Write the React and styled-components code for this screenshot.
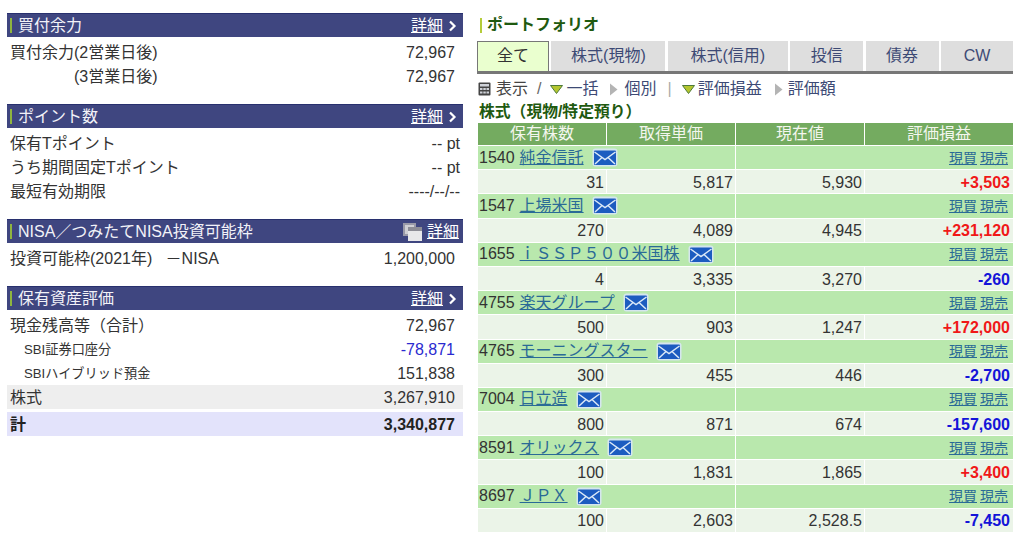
import React from "react";
import styled, { createGlobalStyle } from "styled-components";

const stocks = [
  { code: "1540", name: "純金信託", qty: "31", cost: "5,817", price: "5,930", pl: "+3,503" },
  { code: "1547", name: "上場米国", qty: "270", cost: "4,089", price: "4,945", pl: "+231,120" },
  { code: "1655", name: "ｉＳＳＰ５００米国株", qty: "4", cost: "3,335", price: "3,270", pl: "-260" },
  { code: "4755", name: "楽天グループ", qty: "500", cost: "903", price: "1,247", pl: "+172,000" },
  { code: "4765", name: "モーニングスター", qty: "300", cost: "455", price: "446", pl: "-2,700" },
  { code: "7004", name: "日立造", qty: "800", cost: "871", price: "674", pl: "-157,600" },
  { code: "8591", name: "オリックス", qty: "100", cost: "1,831", price: "1,865", pl: "+3,400" },
  { code: "8697", name: "ＪＰＸ", qty: "100", cost: "2,603", price: "2,528.5", pl: "-7,450" },
];

const tabs = ["全て", "株式(現物)", "株式(信用)", "投信", "債券", "CW"];

const GlobalStyle = createGlobalStyle`
  html, body {
    margin: 0;
    background: #fff;
    overflow: hidden;
  }
  body {
    font-family: "Liberation Sans", "Noto Sans CJK JP", sans-serif;
    font-size: 16px;
    line-height: 22px;
    color: #333;
  }
`;

const Page = styled.div`
  display: flex;
  width: 1024px;
  height: 537px;
  padding: 13px 0 0 7px;
  box-sizing: border-box;
`;

const LeftColumn = styled.div`
  width: 456px;
  margin-right: 14px;
`;

const RightColumn = styled.div`
  width: 537px;
`;

const Panel = styled.section`
  margin-bottom: ${(p) => p.$gap}px;
`;

const PanelHeader = styled.div`
  display: flex;
  align-items: center;
  justify-content: space-between;
  height: 24px;
  padding: 0 ${(p) => (p.$external ? 4 : 6)}px 0 3px;
  background: #3f4680;
  border-top: 1px solid #28306e;
  box-sizing: border-box;
  color: #fff;
`;

const PanelTitle = styled.div`
  display: flex;
  align-items: center;
  gap: 6px;
  font-size: 16px;
  color: #f2f2f8;
`;

const Mark = styled.span`
  display: block;
  width: 2px;
  height: 15px;
  background: ${(p) => p.$color || "#8fb53f"};
`;

const DetailLink = styled.a`
  display: flex;
  align-items: center;
  gap: 5px;
  color: #fff;
  font-size: 16px;
  text-decoration: underline;
`;

const InfoRow = styled.div`
  display: flex;
  align-items: center;
  justify-content: space-between;
  height: 24px;
  box-sizing: border-box;
  padding: 2px ${(p) => (p.$unit ? 3 : 8)}px 0 ${(p) => (p.$sub ? 17 : 3)}px;
  font-size: ${(p) => (p.$sub ? 13.2 : 16)}px;
  margin-top: ${(p) => p.$top || 0}px;
  background: ${(p) => p.$bg || "transparent"};
  font-weight: ${(p) => (p.$bold ? 700 : 400)};
  color: ${(p) => (p.$bold ? "#222" : "#333")};
`;

const Value = styled.span`
  font-size: 16px;
  color: ${(p) => p.$color || "inherit"};
`;

const Indented = styled.span`
  padding-left: 64px;
`;

const PageTitle = styled.div`
  display: flex;
  align-items: center;
  gap: 5px;
  height: 24px;
  padding-left: 3px;
  font-size: 16px;
  font-weight: 700;
  color: #1f5a10;
`;

const TabBar = styled.div`
  display: grid;
  grid-template-columns: 72px 114px 120px 73px 73px 72px;
  column-gap: 2.4px;
  width: 536px;
  height: 33px;
  margin-top: 4px;
  border-bottom: 3px solid #777;
  box-sizing: border-box;
`;

const Tab = styled.div`
  display: flex;
  align-items: center;
  justify-content: center;
  padding-bottom: 1px;
  background: ${(p) => (p.$active ? "#eaffcf" : "#dedede")};
  border: ${(p) => (p.$active ? "1px solid #777" : "0")};
  border-bottom: 0;
  color: ${(p) => (p.$active ? "#333" : "#3d4a75")};
  font-size: 16px;
`;

const Toolbar = styled.div`
  display: flex;
  align-items: center;
  height: 24px;
  margin-top: 3px;
  padding-left: 1px;
  color: #3d4a75;
  font-size: 16px;
`;

const ToolItem = styled.span`
  display: flex;
  align-items: center;
  gap: ${(p) => p.$gap ?? 3}px;
  margin-right: ${(p) => p.$right ?? 10}px;
  color: ${(p) => p.$color || "inherit"};
`;

const SectionTitle = styled.div`
  height: 22px;
  line-height: 22px;
  padding-left: 2px;
  font-size: 15.8px;
  font-weight: 700;
  color: #1f5a10;
`;

const Table = styled.div`
  display: grid;
  grid-template-columns: 128px 128px 128px 148px;
  column-gap: 1px;
  row-gap: 1px;
  width: 535px;
  margin-left: 1px;
`;

const HeadCell = styled.div`
  display: flex;
  align-items: center;
  justify-content: center;
  height: 22px;
  background: #74ab60;
  color: #f3f6ee;
  font-size: 16px;
`;

const NameCell = styled.div`
  grid-column: span 2;
  display: flex;
  align-items: center;
  gap: 5px;
  height: 23.2px;
  padding-left: 1px;
  background: #b9e8ad;
  color: #333;
`;

const OrderCell = styled.div`
  grid-column: span 2;
  display: flex;
  align-items: center;
  justify-content: flex-end;
  gap: 3px;
  height: 23.2px;
  padding-right: 5px;
  background: #b9e8ad;
  font-size: 14px;
`;

const StockLink = styled.a`
  color: #2a6a96;
  text-decoration: underline;
`;

const NumCell = styled.div`
  display: flex;
  align-items: center;
  justify-content: flex-end;
  height: 23.2px;
  box-sizing: border-box;
  padding: 2px ${(p) => (p.$bold ? 3 : 2)}px 0 0;
  background: #ebf4e8;
  color: ${(p) => p.$color || "#333"};
  font-weight: ${(p) => (p.$bold ? 700 : 400)};
`;

const MailSvg = styled.svg`
  margin-left: 3px;
  flex-shrink: 0;
`;

const Chevron = () => (
  <svg width="9" height="12" viewBox="0 0 9 12">
    <path d="M2 1.5 L6.5 6 L2 10.5" fill="none" stroke="#fff" strokeWidth="2.2" />
  </svg>
);

const WindowIcon = () => (
  <svg width="19" height="19" viewBox="0 0 19 19">
    <rect x="0" y="1" width="13" height="13" fill="#9a9aa8" />
    <rect x="2" y="3" width="9" height="9" fill="#d0d0d4" />
    <rect x="5" y="5" width="14" height="14" fill="#e8e8ea" />
    <rect x="5" y="5" width="14" height="4" fill="#8d8d96" />
  </svg>
);

const TableIcon = () => (
  <svg width="13" height="14" viewBox="0 0 13 14">
    <rect x="0.5" y="0.5" width="12" height="13" rx="1" fill="#444" />
    <rect x="2" y="2" width="9" height="2.5" fill="#cfd2d8" />
    <path d="M2 6 h2.5 v2 h-2.5z M5.3 6 h2.5 v2 h-2.5z M8.5 6 h2.5 v2 h-2.5z M2 9.5 h2.5 v2 h-2.5z M5.3 9.5 h2.5 v2 h-2.5z M8.5 9.5 h2.5 v2 h-2.5z" fill="#cfd2d8" />
  </svg>
);

const TriDown = () => (
  <svg width="13" height="9" viewBox="0 0 13 9">
    <path d="M0.5 0.5 H12.5 L6.5 8.5Z" fill="#b4c62e" stroke="#4f7a3a" strokeWidth="1" />
  </svg>
);

const TriRight = () => (
  <svg width="9" height="13" viewBox="0 0 9 13">
    <path d="M1 0.5 L8.5 6.5 L1 12.5Z" fill="#b4b4b4" />
  </svg>
);

const Mail = () => (
  <MailSvg width="26" height="19" viewBox="0 0 26 19">
    <rect x="0.5" y="0.5" width="25" height="18" rx="3" fill="#d5e6ee" />
    <rect x="2" y="2.5" width="22" height="14.5" rx="1" fill="#1c5cc0" />
    <path d="M2.5 4 L13 11.5 L23.5 4 M3 16 L10 9.5 M23 16 L16 9.5" fill="none" stroke="#dbe9f7" strokeWidth="1.5" />
  </MailSvg>
);

const plColor = (pl) => (pl.startsWith("+") ? "#f01818" : "#1414d8");

const Header = ({ title, external }) => (
  <PanelHeader $external={external}>
    <PanelTitle>
      <Mark />
      {title}
    </PanelTitle>
    <DetailLink>
      {external && <WindowIcon />}
      詳細
      {!external && <Chevron />}
    </DetailLink>
  </PanelHeader>
);

export default function App() {
  return (
    <>
      <GlobalStyle />
      <Page>
        <LeftColumn>
          <Panel $gap={16}>
            <Header title="買付余力" />
            <InfoRow $top={3}>
              <span>買付余力(2営業日後)</span>
              <Value>72,967</Value>
            </InfoRow>
            <InfoRow>
              <Indented>(3営業日後)</Indented>
              <Value>72,967</Value>
            </InfoRow>
          </Panel>
          <Panel $gap={16}>
            <Header title="ポイント数" />
            <InfoRow $top={3} $unit>
              <span>保有Tポイント</span>
              <Value>-- pt</Value>
            </InfoRow>
            <InfoRow $unit>
              <span>うち期間固定Tポイント</span>
              <Value>-- pt</Value>
            </InfoRow>
            <InfoRow $unit>
              <span>最短有効期限</span>
              <Value>----/--/--</Value>
            </InfoRow>
          </Panel>
          <Panel $gap={16}>
            <Header title="NISA／つみたてNISA投資可能枠" external />
            <InfoRow $top={3}>
              <span>投資可能枠(2021年)&nbsp;&nbsp;&nbsp;－NISA</span>
              <Value>1,200,000</Value>
            </InfoRow>
          </Panel>
          <Panel $gap={0}>
            <Header title="保有資産評価" />
            <InfoRow $top={3}>
              <span>現金残高等（合計）</span>
              <Value>72,967</Value>
            </InfoRow>
            <InfoRow $sub>
              <span>SBI証券口座分</span>
              <Value $color="#2a2ad0">-78,871</Value>
            </InfoRow>
            <InfoRow $sub>
              <span>SBIハイブリッド預金</span>
              <Value>151,838</Value>
            </InfoRow>
            <InfoRow $bg="#eeeeee">
              <span>株式</span>
              <Value>3,267,910</Value>
            </InfoRow>
            <InfoRow $bg="#e3e3fb" $bold $top={3}>
              <span>計</span>
              <Value>3,340,877</Value>
            </InfoRow>
          </Panel>
        </LeftColumn>
        <RightColumn>
          <PageTitle>
            <Mark $color="#b5cc3a" />
            ポートフォリオ
          </PageTitle>
          <TabBar>
            {tabs.map((t, i) => (
              <Tab key={t} $active={i === 0}>{t}</Tab>
            ))}
          </TabBar>
          <Toolbar>
            <ToolItem $gap={5} $right={9} $color="#444">
              <TableIcon />
              表示
            </ToolItem>
            <ToolItem $right={9} $color="#666">/</ToolItem>
            <ToolItem $right={11}><TriDown />一括</ToolItem>
            <ToolItem $gap={6} $right={11}><TriRight />個別</ToolItem>
            <ToolItem $right={10} $color="#aaa">|</ToolItem>
            <ToolItem $right={12}><TriDown />評価損益</ToolItem>
            <ToolItem $gap={5}><TriRight />評価額</ToolItem>
          </Toolbar>
          <SectionTitle>株式（現物/特定預り）</SectionTitle>
          <Table>
            <HeadCell>保有株数</HeadCell>
            <HeadCell>取得単価</HeadCell>
            <HeadCell>現在値</HeadCell>
            <HeadCell>評価損益</HeadCell>
            {stocks.map((s) => (
              <React.Fragment key={s.code}>
                <NameCell>
                  {s.code}
                  <StockLink>{s.name}</StockLink>
                  <Mail />
                </NameCell>
                <OrderCell>
                  <StockLink>現買</StockLink>
                  <StockLink>現売</StockLink>
                </OrderCell>
                <NumCell>{s.qty}</NumCell>
                <NumCell>{s.cost}</NumCell>
                <NumCell>{s.price}</NumCell>
                <NumCell $bold $color={plColor(s.pl)}>{s.pl}</NumCell>
              </React.Fragment>
            ))}
          </Table>
        </RightColumn>
      </Page>
    </>
  );
}
